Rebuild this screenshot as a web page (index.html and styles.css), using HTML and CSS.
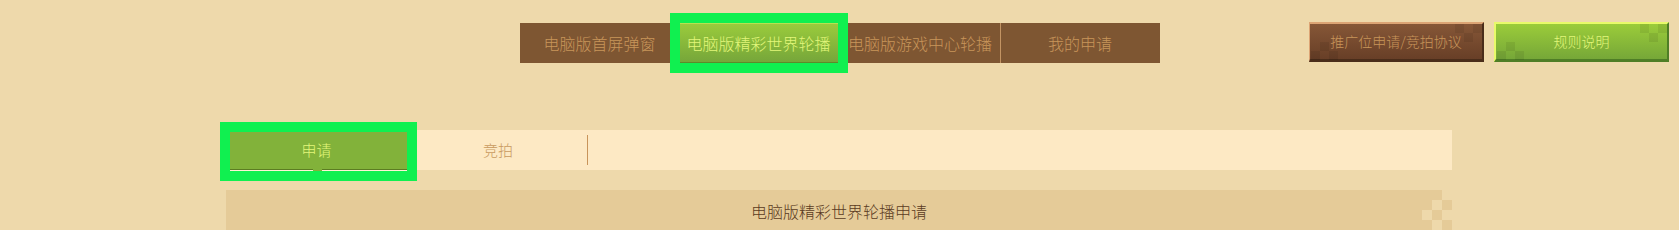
FILE: index.html
```html
<!DOCTYPE html>
<html lang="zh-CN">
<head>
    <meta charset="UTF-8">
    <meta name="viewport" content="width=device-width, initial-scale=1.0">
    <title>推广位申请</title>
    <link rel="stylesheet" href="styles.css">
</head>
<body>
    <div class="topbar">
        <div></div>
        <div class="nav">
            <div class="nav-tab">电脑版首屏弹窗</div>
            <div class="nav-tab active hl">电脑版精彩世界轮播</div>
            <div class="nav-tab">电脑版游戏中心轮播</div>
            <div class="nav-tab">我的申请</div>
        </div>
        <div class="actions">
            <div class="btn btn-brown">推广位申请/竞拍协议</div>
            <div class="btn btn-green">规则说明</div>
        </div>
    </div>

    <div class="sub-bar">
        <div class="sub-tab active">申请</div>
        <div class="sub-tab">竞拍</div>
        <div class="sub-sep"></div>
    </div>

    <div class="panel">
        <div class="panel-title">电脑版精彩世界轮播申请</div>
        <span class="px px-bg" style="right:0;top:0"></span>
        <span class="px px-bg" style="right:10px;top:10px"></span>
        <span class="px px-bg" style="right:20px;top:20px"></span>
        <span class="px px-bg" style="right:0;top:20px"></span>
        <span class="px px-bg" style="right:10px;top:30px"></span>
    </div>
</body>
</html>
```

FILE: styles.css
```css
body {
    margin: 0;
    background: #eed9ab;
    font-family: "Noto Sans CJK SC", "Noto Sans", sans-serif;
    font-weight: 300;
    overflow: hidden;
}

/* 顶部导航 */
.topbar {
    display: grid;
    grid-template-columns: 1fr 640px 1fr;
    padding-top: 22px;
}
.nav {
    display: flex;
    margin-top: 1px;
}
.nav-tab {
    position: relative;
    box-sizing: border-box;
    width: 160px;
    height: 40px;
    line-height: 40px;
    text-align: center;
    white-space: nowrap;
    font-size: 16px;
    color: #c8955a;
    background: #7e5632;
}
.nav-tab + .nav-tab {
    border-left: 1px solid #c39463;
}
.nav-tab.active {
    z-index: 1;
    border: none;
    border-top: 1px solid #b8e050;
    border-right: 2px solid #5e8a2a;
    border-bottom: 1px solid #5e8a2a;
    line-height: 38px;
    color: #e2f67a;
    background: linear-gradient(#9acb3c, #76a63a);
}

/* 绿色标注框 */
.hl::after {
    content: '';
    position: absolute;
    top: -11px;
    left: -10px;
    right: -10px;
    bottom: -11px;
    border: 10px solid #10f050;
    pointer-events: none;
}

.actions {
    justify-self: end;
    display: flex;
    gap: 10px;
    margin-right: 10px;
}
.btn {
    position: relative;
    box-sizing: border-box;
    width: 175px;
    height: 40px;
    line-height: 35px;
    text-align: center;
    font-size: 14px;
}
.btn::before, .btn::after {
    content: '';
    position: absolute;
    width: 9px;
    height: 9px;
    background: rgba(0, 0, 0, 0.07);
}
.btn::before {
    right: 0;
    top: 0;
    box-shadow: -18px 0 0 rgba(0, 0, 0, 0.07), -9px 9px 0 rgba(0, 0, 0, 0.07);
}
.btn::after {
    left: 10px;
    top: 18px;
    box-shadow: -9px 9px 0 rgba(0, 0, 0, 0.07), 9px 9px 0 rgba(0, 0, 0, 0.07);
}
.btn-brown {
    color: #c8955a;
    background: linear-gradient(#865737, #683f27);
    border-top: 2px solid #dca474;
    border-left: 1px solid #dca474;
    border-right: 2px solid #4a2d1a;
    border-bottom: 3px solid #4a2d1a;
}
.btn-green {
    color: #e2f67a;
    background: linear-gradient(#9bcc3a, #76a738);
    border-top: 2px solid #e8fa6a;
    border-left: 2px solid #e8fa6a;
    border-right: 2px solid #4f7e26;
    border-bottom: 3px solid #4f7e26;
}

/* 申请 / 竞拍 */
.sub-bar {
    display: flex;
    align-items: center;
    height: 40px;
    margin: 67px 227px 0 226px;
    background: #fde9c4;
}
.sub-tab {
    width: 180px;
    height: 40px;
    line-height: 40px;
    text-align: center;
    font-size: 15px;
    color: #c89a60;
}
.sub-tab.active {
    position: relative;
    box-sizing: border-box;
    width: 182px;
    color: #e2f67a;
    background: #82b23a;
    border-right: 1px solid #5c7d22;
    box-shadow: inset 0 -1px 0 #5c7d22, 0 1px 0 #fff3d6;
}
.sub-tab.active::before {
    content: '';
    position: absolute;
    left: 87px;
    bottom: -1px;
    width: 9px;
    height: 2px;
    background: #82b23a;
}
.sub-tab.active::after {
    content: '';
    position: absolute;
    top: -8px;
    left: -6px;
    right: -10px;
    bottom: -11px;
    border: 10px solid #10f050;
}
.sub-sep {
    width: 1px;
    height: 30px;
    margin-left: -1px;
    background: #c8945a;
}

/* 申请面板 */
.panel {
    position: relative;
    box-sizing: border-box;
    height: 40px;
    margin: 20px 227px 0 226px;
    padding-top: 10px;
    background: #e5cb98;
}
.panel-title {
    font-size: 16px;
    line-height: 22px;
    text-align: center;
    color: #5b3b22;
}
.px {
    position: absolute;
    width: 10px;
    height: 10px;
}
.px-bg {
    background: #eed9ab;
}
```
